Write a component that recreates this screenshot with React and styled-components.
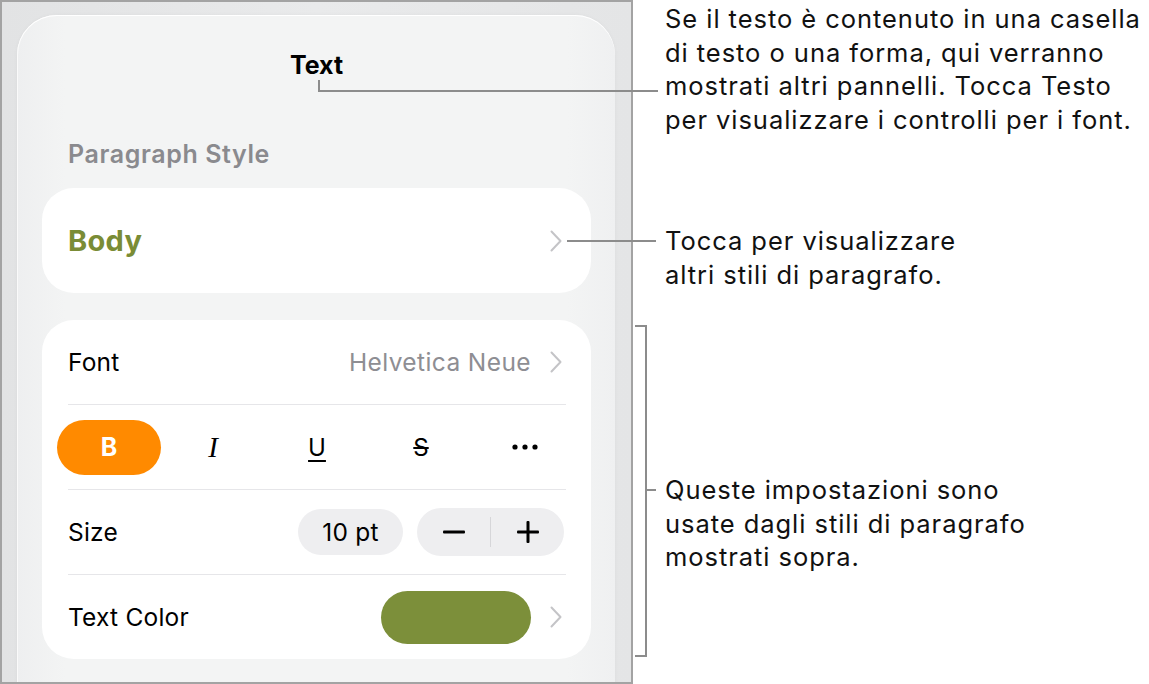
import { createGlobalStyle, styled } from "styled-components";

const GlobalStyle = createGlobalStyle`
    html, body {
        margin: 0;
        padding: 0;
        background: #ffffff;
    }
    body {
        font-family: Inter, "Noto Sans", sans-serif;
        color: #000;
    }
`

const Page = styled.div`
    position: relative;
    width: 1149px;
    height: 684px;
    display: flex;
    overflow: hidden;
`

const Frame = styled.div`
    box-sizing: border-box;
    width: 633px;
    height: 684px;
    border: 2px solid #a3a3a3;
    background: linear-gradient(90deg, #e2e3e4 0%, #e9eaeb 50%, #e4e5e6 100%);
    padding: 13px 16px 0 15px;
    overflow: hidden;
`

const Sheet = styled.div`
    box-sizing: border-box;
    height: 720px;
    border-radius: 40px;
    background: linear-gradient(90deg, #eeeff0 0%, #f3f4f4 8%, #f3f4f4 92%, #eff0f1 100%);
    box-shadow: inset 0 1px 0 #ffffff, inset 1px 0 0 #fafafa, 0 0 4px rgb(0 0 0 / 0.04);
    padding: 35px 24px 0 25px;
    display: flex;
    flex-direction: column;
`

const Title = styled.h2`
    margin: 0;
    text-align: center;
    font-size: 25px;
    line-height: 30px;
    font-weight: 700;
`

const SectionLabel = styled.div`
    margin: 60px 0 20px 26px;
    font-size: 25px;
    line-height: 28px;
    font-weight: 600;
    letter-spacing: 0.6px;
    color: #8a8a8e;
`

const Card = styled.div`
    background: #ffffff;
    border-radius: 32px;
    margin-bottom: ${(p) => p.$gap || 0}px;
`

const StyleRow = styled.div`
    height: 105px;
    display: flex;
    align-items: center;
    justify-content: space-between;
    padding: 0 29px 0 26px;
`

const StyleName = styled.span`
    font-size: 29px;
    font-weight: 700;
    letter-spacing: 0.3px;
    color: #7a8c35;
`

const Row = styled.div`
    box-sizing: border-box;
    height: ${(p) => (p.$first ? 84 : 85)}px;
    margin: 0 25px 0 26px;
    display: flex;
    align-items: center;
    justify-content: space-between;
    gap: 14px;
    border-top: ${(p) => (p.$first ? "none" : "1px solid #e6e6e9")};
`

const Label = styled.span`
    font-size: 24.5px;
    letter-spacing: 0.2px;
    color: #000;
    flex: 1;
`

const Value = styled.span`
    font-size: 24.5px;
    letter-spacing: 0.4px;
    color: #8e8e93;
`

const FormatRow = styled(Row)`
    justify-content: flex-start;
`

const FormatGrid = styled.div`
    display: grid;
    grid-template-columns: repeat(5, 104px);
    margin-left: -11px;
`

const FormatBtn = styled.div`
    height: 55px;
    border-radius: 28px;
    display: flex;
    align-items: center;
    justify-content: center;
    background: ${(p) => (p.$active ? "#ff8a00" : "transparent")};
    color: ${(p) => (p.$active ? "#fff" : "#000")};
`

const Glyph = styled.span`
    font-family: ${(p) => (p.$serif ? '"Liberation Serif", serif' : 'Inter, sans-serif')};
    font-weight: ${(p) => p.$weight || 400};
    font-style: ${(p) => (p.$italic ? "italic" : "normal")};
    text-decoration: ${(p) => p.$deco || "none"};
    text-decoration-thickness: 2px;
    text-underline-offset: 4px;
    font-size: ${(p) => p.$size || 24}px;
`

const Pill = styled.div`
    height: 46px;
    border-radius: 23px;
    background: #eeeef0;
    display: flex;
    align-items: center;
    justify-content: center;
    font-size: 24.5px;
    letter-spacing: 0.2px;
    width: ${(p) => p.$w}px;
`

const Stepper = styled.div`
    height: 48px;
    width: 147px;
    margin-right: 2px;
    border-radius: 24px;
    background: #eeeef0;
    display: flex;
    align-items: center;
`

const StepHalf = styled.div`
    flex: 1;
    height: 30px;
    display: flex;
    align-items: center;
    justify-content: center;
    border-left: ${(p) => (p.$split ? "1px solid #d6d6d9" : "none")};
`

const Swatch = styled.div`
    width: 150px;
    height: 53px;
    border-radius: 27px;
    background: #7c8f3a;
`

const Chevron = styled.svg`
    width: 12px;
    height: 22px;
    flex: none;
    margin-left: ${(p) => p.$ml || 0}px;
    margin-right: ${(p) => p.$mr || 0}px;
`

const Notes = styled.div`
    flex: 1;
    padding: 2px 0 0 32px;
    display: flex;
    flex-direction: column;
`

const Note = styled.p`
    margin: 0;
    margin-top: ${(p) => p.$mt}px;
    font-size: 25.5px;
    line-height: 33.5px;
    color: #111;
    letter-spacing: 0.95px;
    white-space: nowrap;
`

const Leader = styled.div`
    position: absolute;
    background: #8c8c8c;
`

const ChevronRight = ({ ml, mr }) => (
    <Chevron viewBox="0 0 12 22" $ml={ml} $mr={mr}>
        <path d="M1.5 1.5 L10.5 11 L1.5 20.5" fill="none" stroke="#c4c4c7" strokeWidth="2" strokeLinecap="round" strokeLinejoin="round" />
    </Chevron>
)

const App = () => {
    return (
        <Page>
            <GlobalStyle />
            <Frame>
                <Sheet>
                    <Title>Text</Title>
                    <SectionLabel>Paragraph Style</SectionLabel>
                    <Card $gap={27}>
                        <StyleRow>
                            <StyleName>Body</StyleName>
                            <ChevronRight />
                        </StyleRow>
                    </Card>
                    <Card>
                        <Row $first>
                            <Label>Font</Label>
                            <Value>Helvetica Neue</Value>
                            <ChevronRight ml={5} mr={4} />
                        </Row>
                        <FormatRow>
                            <FormatGrid>
                                <FormatBtn $active><Glyph $weight={700} $size={25}>B</Glyph></FormatBtn>
                                <FormatBtn><Glyph $serif $italic $size={29}>I</Glyph></FormatBtn>
                                <FormatBtn><Glyph $deco="underline">U</Glyph></FormatBtn>
                                <FormatBtn><Glyph $deco="line-through">S</Glyph></FormatBtn>
                                <FormatBtn>
                                    <svg width="26" height="6" viewBox="0 0 26 6">
                                        <circle cx="3" cy="3" r="2.6" fill="#000" />
                                        <circle cx="13" cy="3" r="2.6" fill="#000" />
                                        <circle cx="23" cy="3" r="2.6" fill="#000" />
                                    </svg>
                                </FormatBtn>
                            </FormatGrid>
                        </FormatRow>
                        <Row>
                            <Label>Size</Label>
                            <Pill $w={105}>10 pt</Pill>
                            <Stepper>
                                <StepHalf>
                                    <svg width="22" height="4" viewBox="0 0 22 4"><rect x="0" y="0.5" width="22" height="3" rx="1" fill="#000" /></svg>
                                </StepHalf>
                                <StepHalf $split>
                                    <svg width="22" height="22" viewBox="0 0 22 22">
                                        <rect x="0" y="9.5" width="22" height="3" rx="1" fill="#000" />
                                        <rect x="9.5" y="0" width="3" height="22" rx="1" fill="#000" />
                                    </svg>
                                </StepHalf>
                            </Stepper>
                        </Row>
                        <Row>
                            <Label>Text Color</Label>
                            <Swatch />
                            <ChevronRight ml={5} mr={4} />
                        </Row>
                    </Card>
                </Sheet>
            </Frame>
            <Notes>
                <Note $mt={0}>
                    Se il testo è contenuto in una casella<br />
                    di testo o una forma, qui verranno<br />
                    mostrati altri pannelli. Tocca Testo<br />
                    per visualizzare i controlli per i font.
                </Note>
                <Note $mt={88}>
                    Tocca per visualizzare<br />
                    altri stili di paragrafo.
                </Note>
                <Note $mt={182}>
                    Queste impostazioni sono<br />
                    usate dagli stili di paragrafo<br />
                    mostrati sopra.
                </Note>
            </Notes>

            <Leader style={{ left: 318, top: 80, width: 2, height: 12 }} />
            <Leader style={{ left: 318, top: 90, width: 340, height: 2 }} />
            <Leader style={{ left: 567, top: 240, width: 89, height: 2 }} />
            <Leader style={{ left: 645, top: 325, width: 2, height: 332 }} />
            <Leader style={{ left: 635, top: 325, width: 12, height: 2 }} />
            <Leader style={{ left: 635, top: 655, width: 12, height: 2 }} />
            <Leader style={{ left: 645, top: 489, width: 11, height: 2 }} />
        </Page>
    )
}

export default App
